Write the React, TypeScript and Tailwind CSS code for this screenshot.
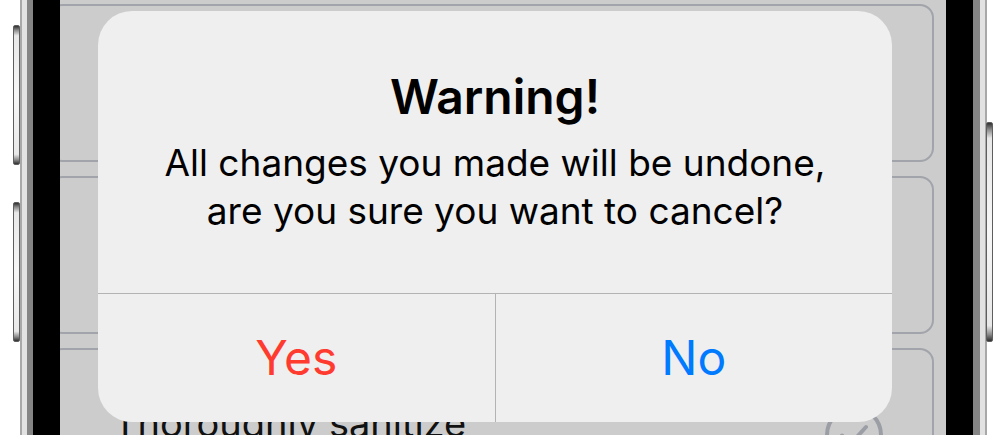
import React from "react";

const font = { fontFamily: "Inter, 'Noto Sans', 'Liberation Sans', sans-serif" };

function SideButton({ className }: { className: string }) {
  return (
    <div
      className={`absolute w-[7px] rounded-[2px] border border-[#5e5e5e] bg-[linear-gradient(to_bottom,#2f2f2f_0%,#8a8a8a_3%,#e8e8e8_7%,#f7f7f7_50%,#e8e8e8_93%,#8a8a8a_97%,#2f2f2f_100%)] ${className}`}
    />
  );
}

function CheckCircle() {
  return (
    <svg width="58" height="58" viewBox="0 0 58 58" fill="none">
      <circle cx="29" cy="29" r="27" stroke="#9b9ea5" strokeWidth="4" />
      <path
        d="M17 29.5 L25.5 38 L41 21"
        stroke="#9b9ea5"
        strokeWidth="4"
        strokeLinecap="round"
        strokeLinejoin="round"
      />
    </svg>
  );
}

function Card({ children }: { children?: React.ReactNode }) {
  return (
    <div className="h-[158px] shrink-0 ml-[-12px] mr-[12px] rounded-[14px] border-2 border-[#a1a4ab]">
      {children}
    </div>
  );
}

export default function App() {
  return (
    <div className="relative w-[1001px] h-[435px] overflow-hidden bg-white" style={font}>
      {/* device frame */}
      <div className="ml-[20px] w-[967px] h-full bg-[#a8a8a8] px-[2px]">
        <div className="h-full bg-[#e2e2e2] px-[5px]">
          <div className="h-full bg-[#858585] pl-[6px] pr-[7px]">
            <div className="h-full bg-black px-[27px]">
              {/* screen */}
              <div className="h-full bg-[#cccccc] pt-[4px] flex flex-col gap-[14px] overflow-hidden">
                <Card />
                <Card />
                <Card>
                  <div className="flex items-start justify-between pl-[63px] pr-[49px] pt-[56px]">
                    <span className="mt-[-2px] text-[38px] leading-none text-[#111]">Thoroughly sanitize</span>
                    <CheckCircle />
                  </div>
                </Card>
              </div>
            </div>
          </div>
        </div>
      </div>

      {/* hardware buttons */}
      <SideButton className="left-[13px] top-[25px] h-[140px]" />
      <SideButton className="left-[13px] top-[202px] h-[140px]" />
      <SideButton className="left-[986px] top-[122px] h-[220px]" />

      {/* alert */}
      <div className="absolute left-[98px] top-[11px] w-[794px] h-[411px] rounded-[34px] bg-[#efefef] flex flex-col overflow-hidden">
        <div className="h-[282px] shrink-0 flex flex-col items-center text-center pt-[58px] text-black">
          <div className="text-[48px] font-semibold leading-[56px]">Warning!</div>
          <div className="mt-[14px] text-[37px] leading-[48px]">
            All changes you made will be undone,
            <br />
            are you sure you want to cancel?
          </div>
        </div>
        <div className="h-px bg-[#b3b3b3] shrink-0" />
        <div className="flex flex-1">
          <button className="flex-1 flex items-center justify-center text-[48px] leading-none text-[#ff3b30]">
            Yes
          </button>
          <div className="w-px bg-[#b3b3b3]" />
          <button className="flex-1 flex items-center justify-center text-[48px] leading-none text-[#007aff]">
            No
          </button>
        </div>
      </div>
    </div>
  );
}
